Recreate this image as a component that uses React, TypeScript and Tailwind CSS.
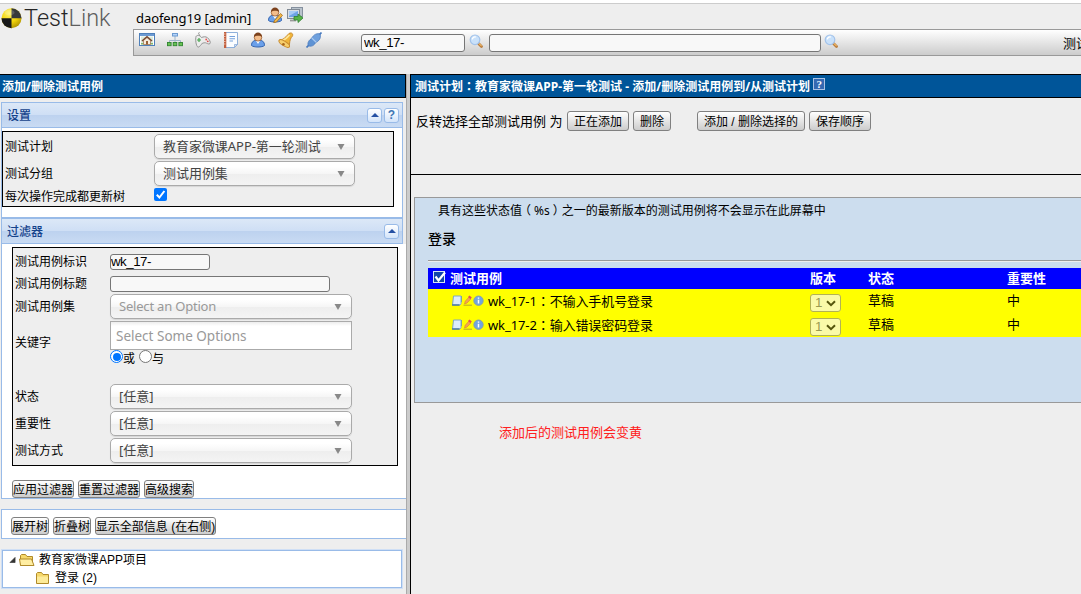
import type { ReactNode } from "react";

const ui = "font-['Noto_Sans','Noto_Sans_CJK_SC',sans-serif]";
const arial = "font-['Liberation_Sans','Noto_Sans_CJK_SC',sans-serif]";

function Icon({ children, className = "" }: { children: ReactNode; className?: string }) {
  return (
    <svg viewBox="0 0 16 16" className={"block size-4 shrink-0 " + className}>
      {children}
    </svg>
  );
}

function Mark({ children, className = "" }: { children: ReactNode; className?: string }) {
  return <span className={"font-['Noto_Sans_CJK_TC',sans-serif] " + className}>{children}</span>;
}

function Logo() {
  return (
    <div className="flex w-[133px] shrink-0 items-start pl-px">
      <svg viewBox="0 0 21 22" className="mt-[3px] h-[22px] w-[21px]">
        <defs>
          <radialGradient id="ball" cx="0.4" cy="0.25" r="0.8">
            <stop offset="0" stopColor="#fff36a" />
            <stop offset="0.55" stopColor="#f2d40a" />
            <stop offset="1" stopColor="#a88c00" />
          </radialGradient>
        </defs>
        <circle cx="10.5" cy="11.3" r="10" fill="url(#ball)" />
        <path d="M10.5 11.3V1.3a10 10 0 0 1 10 10z" fill="#383a3b" />
        <path d="M10.5 11.3v10a10 10 0 0 1-10-10z" fill="#18191a" />
        <ellipse cx="8.5" cy="5.5" rx="5" ry="3" fill="#fff" opacity=".18" />
      </svg>
      <div className="ml-[2px] whitespace-nowrap font-['Roboto','Liberation_Sans',sans-serif] text-[23.5px] leading-[29px] font-light text-[#262626]">
        Test<span className="font-light text-[#5e5e5e]">Link</span>
      </div>
    </div>
  );
}

function Magnifier({ className = "" }: { className?: string }) {
  return (
    <Icon className={className}>
      <path d="M9.500 9.500l3 3" stroke="#b87a3a" strokeWidth="2.800" strokeLinecap="round" />
      <path d="M10 9.500l2.600 2.600" stroke="#edb868" strokeWidth="1.100" />
      <circle cx="6" cy="5.800" r="4.800" fill="#c9e1fa" stroke="#a3c3ea" strokeWidth="1.200" />
      <path d="M3.300 5.300a3 3 0 0 1 3.500-2.300" stroke="#fff" strokeWidth="1.300" fill="none" />
    </Icon>
  );
}

function HomeIcon() {
  return (
    <Icon>
      <rect x=".5" y="1.500" width="15" height="12" fill="#fff" stroke="#4f80ba" />
      <path d="M1 2h14v2H1z" fill="#6d9bd3" />
      <path d="M2 4.500h12v8H2z" fill="#dcebdc" />
      <path d="M2 12.500h12V11H2z" fill="#85b870" />
      <path d="M4.500 8.500V12.500h7v-4L8 5.500z" fill="#f6ecdc" stroke="#a06a45" strokeWidth=".7" />
      <path d="M3 9L8 4.700 13 9" fill="none" stroke="#7a4a34" strokeWidth="1.500" />
      <path d="M7 9h2v3.500H7z" fill="#9a6238" />
    </Icon>
  );
}

function SitemapIcon() {
  return (
    <Icon>
      <path d="M8 4v4M2.500 11V8.500h11V11M8 8v3" fill="none" stroke="#a0b4c8" />
      <rect x="5.500" y="1.500" width="5" height="2.500" fill="#b4d4fb" stroke="#6d9bd0" />
      <g fill="#69c254" stroke="#2f8430" strokeWidth=".9">
        <rect x=".5" y="10.500" width="3.600" height="3.200" />
        <rect x="6.200" y="10.500" width="3.600" height="3.200" />
        <rect x="11.900" y="10.500" width="3.600" height="3.200" />
      </g>
    </Icon>
  );
}

function GamepadIcon() {
  return (
    <Icon>
      <path d="M4 4.500C6 3 2 1.500 4.500.300" stroke="#888" fill="none" />
      <path
        d="M1 4.500C2 2.800 5 3 6.500 5.500c2-.7 4-1.300 6 .2 2 1.500 3.500 5 2.400 6-1.200 1-3.200-.7-4.500-.9-1.800 0-3 .1-4.300 1.700-1 1.300-1.800 3-3.200 2.500C1 14.300.2 7 1 4.500z"
        fill="#ececec"
        stroke="#8b8b8b"
        strokeWidth=".9"
      />
      <path d="M4 6v4M2 8h4" stroke="#45a54b" strokeWidth="1.200" />
      <circle cx="11.200" cy="7.500" r=".9" fill="#e65454" />
      <circle cx="12.800" cy="9.300" r=".9" fill="#db4444" />
    </Icon>
  );
}

function NotebookIcon() {
  return (
    <Icon>
      <path d="M1.500.5h13v12l-3 3h-10z" fill="#fbfdff" stroke="#8fb0da" />
      <path d="M1 0h2.300v16H1z" fill="#c2603f" />
      <path d="M.5 2h2M.5 4.500h2M.5 7h2M.5 9.500h2M.5 12h2" stroke="#f2d4c5" strokeWidth=".8" />
      <path d="M6.500 4.500h5.500M6.500 6.800h5.500M6.500 9h3.500" stroke="#75a1dc" strokeWidth="1.100" />
      <path d="M11.500 15.500v-3h3z" fill="#cddff5" stroke="#7fa4d4" strokeWidth=".7" />
    </Icon>
  );
}

function UserShape() {
  return (
    <>
      <path d="M1.500 13.500C1.500 9.500 4 8 8 8s6.500 1.500 6.500 5.500c-2 2-11 2-13 0z" fill="#6ba0ea" stroke="#3465b0" />
      <path d="M5.800 8.500L8 12l2.200-3.500z" fill="#fff" />
      <circle cx="8" cy="5.300" r="3.800" fill="#f3bd8b" stroke="#995a2e" strokeWidth=".8" />
      <path d="M4 5c0-6 8-6 8 0-1.700-1.800-6-1.800-8 0z" fill="#7c421d" />
    </>
  );
}

function BellIcon() {
  return (
    <Icon>
      <path
        d="M1 8.500C5 8 7.500 5.500 10 2.500c1-1.700 3.500-2 4.300-.8.8 1 .4 2.600-1 3.800-1.500 2-1.800 5.500-2 9.500z"
        fill="#f0b53b"
        stroke="#c98a2c"
      />
      <path d="M3.500 9C7 8 9 6 11.500 3" stroke="#ffe696" strokeWidth="1.600" fill="none" />
      <ellipse cx="6.200" cy="11.500" rx="6" ry="2.300" transform="rotate(32 6.200 11.500)" fill="#f7cf6d" stroke="#c98a2c" />
      <circle cx="5.400" cy="12.300" r="1.300" fill="#a8651b" />
    </Icon>
  );
}

function PlugIcon() {
  return (
    <Icon>
      <path d="M.5 15.500l3-3M12.500 3.500l3-3" stroke="#4779bd" strokeWidth="1.600" />
      <path d="M2.200 13.800C1.200 10.500 3 8 6.200 6l3.800 3.800C8.500 13.500 5.500 15 2.200 13.800z" fill="#5f93d4" stroke="#4779bd" strokeWidth=".8" />
      <path d="M6 5.800C7.500 2.800 11 .8 14 2c1.300 3.200-.4 6.500-3.600 8.200z" fill="#6fa0dd" stroke="#4779bd" strokeWidth=".8" />
      <path d="M5.800 6l4.400 4.200" stroke="#a9caf2" strokeWidth="1.200" />
    </Icon>
  );
}

function TopBar() {
  return (
    <header className="flex h-[74px] w-full border-t border-[#ccc] bg-[#eee]">
      <Logo />
      <div className="flex min-w-0 grow flex-col">
        <div className="flex h-[25px] items-start pl-[3px]">
          <span className={ui + " mt-[4px] w-[131px] whitespace-nowrap text-[13px] leading-[20px] tracking-[-0.08px]"}>
            daofeng19 [admin]
          </span>
          <Icon className="mt-[3px]">
            <UserShape />
            <path d="M7.500 13.500l6-7 2 1.800-6 6.700-2.800.8z" fill="#f4b948" stroke="#a46b1b" strokeWidth=".8" />
          </Icon>
          <Icon className="ml-[4px] mt-[3px]">
            <rect x="4.500" y=".5" width="11" height="9" fill="#b9c3cc" stroke="#85909e" />
            <rect x=".5" y="2.500" width="12" height="9" fill="#d9dee4" stroke="#808994" />
            <path d="M2 4h9v6H2z" fill="#6fa3e6" />
            <path d="M2 4h9L2 9z" fill="#a8cbf5" />
            <path d="M3 13.500h6" stroke="#999" strokeWidth="1.800" />
            <path d="M7 9.500h4V7l5 4-5 4.500V13H7z" fill="#57b347" stroke="#2d8130" strokeWidth=".8" />
          </Icon>
        </div>
        <div className="flex h-[27px] w-full overflow-hidden border-y border-l border-[#999] bg-linear-to-b from-white to-[#ccc]">
          <div className="flex w-[227px] shrink-0 gap-[12px] pl-[5px] pt-[2px]">
            <HomeIcon />
            <SitemapIcon />
            <GamepadIcon />
            <NotebookIcon />
            <Icon className="-ml-px">
              <UserShape />
            </Icon>
            <BellIcon />
            <PlugIcon />
          </div>
          <input
            defaultValue="wk_17-"
            className={arial + " mt-[4px] h-[18px] w-[104px] shrink-0 rounded-[3px] border border-[#767676] bg-[#f8f8f8] px-[2px] pb-px text-[13.3px] leading-[15px] tracking-[-0.5px]"}
          />
          <Magnifier className="ml-[4px] mt-[4px]" />
          <input className="ml-[4px] mt-[4px] h-[18px] w-[332px] shrink-0 rounded-[3px] border border-[#767676] bg-[#f8f8f8]" />
          <Magnifier className="ml-[3px] mt-[4px]" />
          <span className={ui + " ml-auto mt-[3px] w-[18px] overflow-hidden whitespace-nowrap text-[13px] leading-[20px]"}>
            测试
          </span>
        </div>
      </div>
    </header>
  );
}

function ToolButton({ children }: { children: ReactNode }) {
  return (
    <div className="flex size-[15px] shrink-0 items-center justify-center rounded-[3px] border border-[#99bbe8] bg-linear-to-b from-white to-[#d3e4fa]">
      {children}
    </div>
  );
}

function UpArrow() {
  return (
    <svg viewBox="0 0 8 4" className="h-[4px] w-[8px]">
      <path d="M0 4l4-4 4 4z" fill="#2450a4" />
    </svg>
  );
}

function PanelHeader({ title, help }: { title: string; help?: boolean }) {
  return (
    <div className="flex h-[26px] w-[402px] items-center gap-[2px] border border-[#99bbe8] bg-[linear-gradient(to_bottom,#dce8f7_0%,#cfdff5_48%,#bdd2ef_52%,#c9dbf3_100%)] pr-[3px] pl-[5px]">
      <span className={ui + " grow pt-[2px] text-[12px] leading-[20px] font-medium text-[#15428b]"}>{title}</span>
      <ToolButton>
        <UpArrow />
      </ToolButton>
      {help && (
        <ToolButton>
          <span className="font-['Liberation_Sans',sans-serif] text-[12px] leading-none font-bold text-[#4077b5]">?</span>
        </ToolButton>
      )}
    </div>
  );
}

function Select({ children, wide, muted }: { children: ReactNode; wide?: boolean; muted?: boolean }) {
  return (
    <div
      className={
        (wide ? "w-[242px] " : "w-[201px] ") +
        (muted ? "text-[#999] " : "text-[#444] ") +
        ui +
        " flex h-[25px] items-center justify-between rounded-[5px] border border-[#aaa] bg-[linear-gradient(to_bottom,#fff_20%,#f6f6f6_50%,#eee_52%,#f4f4f4_100%)] pr-[9px] pl-[8px] text-[13px] shadow-[0_1px_1px_rgba(0,0,0,0.1)]"
      }
    >
      <span className={"whitespace-nowrap " + (muted ? "tracking-[-0.2px]" : "tracking-[-0.04px]")}>{children}</span>
      <svg viewBox="0 0 8 6" className="h-[6px] w-[8px] shrink-0">
        <path d="M.5 0h7L4 6z" fill="#888" />
      </svg>
    </div>
  );
}

function Row({ label, className, children }: { label: string; className: string; children: ReactNode }) {
  return (
    <div className={"flex items-center " + className}>
      <span className={ui + " shrink-0 whitespace-nowrap text-[12px] leading-[18px]"}>{label}</span>
      <div className="ml-auto shrink-0">{children}</div>
    </div>
  );
}

function SmallButton({ children, className }: { children: ReactNode; className: string }) {
  return (
    <button
      className={
        arial +
        " flex h-[18px] shrink-0 items-center justify-center whitespace-nowrap rounded-[3px] border border-[#808080] bg-linear-to-b from-white to-[#ccc] pt-[2px] text-[12px] leading-none " +
        className
      }
    >
      {children}
    </button>
  );
}

function Radio({ on }: { on?: boolean }) {
  return (
    <span
      className={
        "mb-[2px] flex size-[13px] items-center justify-center rounded-full border bg-white " +
        (on ? "border-[#0075ff]" : "border-[#767676]")
      }
    >
      {on && <span className="size-[8px] shrink-0 rounded-full bg-[#0075ff]" />}
    </span>
  );
}

function Folder({ open }: { open?: boolean }) {
  return (
    <Icon>
      <path d="M1.500 13.500v-10l1-1h4l1.500 2h5.500v9z" fill="#f6d86b" stroke="#b08a2a" />
      {open ? (
        <path d="M1.500 13.500l-1-6.500h12l2.500 6.500z" fill="#ffeea2" stroke="#b08a2a" />
      ) : (
        <path d="M2 6.500h11V13H2z" fill="#fdeb99" />
      )}
    </Icon>
  );
}

function SettingsPanel() {
  return (
    <section className="mt-[4px] ml-px h-[116px] w-[402px] shrink-0 border border-t-0 border-[#99bbe8] bg-white">
      <div className="-mx-px">
        <PanelHeader title="设置" help />
      </div>
      <div className="mt-[3px] h-[76px] w-[392px] border border-black bg-[#eee] pt-[2px] pl-[2px]">
        <Row label="测试计划" className="h-[25px] w-[350px]">
          <Select>教育家微课APP-第一轮测试</Select>
        </Row>
        <Row label="测试分组" className="mt-[2px] h-[25px] w-[350px]">
          <Select>测试用例集</Select>
        </Row>
        <div className="flex h-[20px] items-center">
          <span className={ui + " w-[149px] shrink-0 pt-[2px] text-[12px]"}>每次操作完成都更新树</span>
          <span className="mb-[4px] size-[13px] rounded-[2px] bg-[#0075ff]">
            <svg viewBox="0 0 13 13" className="size-[13px]">
              <path d="M2.800 6.800l2.600 2.700 5-6.500" fill="none" stroke="#fff" strokeWidth="2" />
            </svg>
          </span>
        </div>
      </div>
    </section>
  );
}

function FilterPanel() {
  return (
    <section className="ml-px flex h-[281px] shrink-0 flex-col">
      <PanelHeader title="过滤器" />
      <div className="h-[255px] border-b border-l border-[#99bbe8] bg-white pt-[3px] pl-[10px]">
        <div className="h-[219px] w-[386px] border border-black bg-[#eee] pt-[6px] pl-[2px]">
          <Row label="测试用例标识" className="h-[16px] w-[195px]">
            <input
              defaultValue="wk_17-"
              className={arial + " block h-[16px] w-[100px] rounded-[3px] border border-[#767676] bg-[#f8f8f8] px-0 pb-[2px] text-[13.3px] leading-[12px] tracking-[-0.5px]"}
            />
          </Row>
          <Row label="测试用例标题" className="mt-[6px] h-[16px] w-[315px]">
            <input className="block h-[16px] w-[220px] rounded-[3px] border border-[#767676] bg-[#f8f8f8]" />
          </Row>
          <Row label="测试用例集" className="mt-[2px] h-[25px] w-[337px]">
            <Select wide muted>
              Select an Option
            </Select>
          </Row>
          <Row label="关键字" className="mt-[2px] h-[44px] w-[337px]">
            <div className={ui + " flex h-[29px] w-[242px] items-center border border-[#aaa] bg-[linear-gradient(to_bottom,#eee_1%,#fff_15%)] pt-px pl-[5px] text-[13.5px] text-[#999]"}>
              Select Some Options
            </div>
            <div className={ui + " flex h-[15px] items-center text-[12px] leading-[15px]"}>
              <Radio on />
              <span className="mt-[2px] mr-[4px]">或</span>
              <Radio />
              <span className="mt-[2px]">与</span>
            </div>
          </Row>
          <Row label="状态" className="mt-[19px] h-[25px] w-[337px]">
            <Select wide>[任意]</Select>
          </Row>
          <Row label="重要性" className="mt-[2px] h-[25px] w-[337px]">
            <Select wide>[任意]</Select>
          </Row>
          <Row label="测试方式" className="mt-[2px] h-[25px] w-[337px]">
            <Select wide>[任意]</Select>
          </Row>
        </div>
        <div className="mt-[14px] flex gap-[4px]">
          <SmallButton className="w-[62px]">应用过滤器</SmallButton>
          <SmallButton className="w-[62px]">重置过滤器</SmallButton>
          <SmallButton className="w-[50px]">高级搜索</SmallButton>
        </div>
      </div>
    </section>
  );
}

function LeftPane() {
  return (
    <aside className="flex w-[406px] shrink-0 flex-col bg-[#eee]">
      <div className={ui + " flex h-[24px] shrink-0 items-center border-y border-r border-black bg-[#059] pt-[2px] pl-[2px] text-[12px] font-bold text-white"}>
        添加/删除测试用例
      </div>
      <SettingsPanel />
      <FilterPanel />
      <section className="mt-[10px] ml-px flex h-[30px] shrink-0 gap-[4px] border-y border-l border-[#99bbe8] bg-white pt-[7px] pl-[9px]">
        <SmallButton className="w-[38px]">展开树</SmallButton>
        <SmallButton className="w-[38px]">折叠树</SmallButton>
        <SmallButton className="w-[121px]">显示全部信息 (在右侧)</SmallButton>
      </section>
      <section className="mt-[11px] ml-[2px] h-[38px] w-[400px] shrink-0 border border-[#99bbe8] bg-white shadow-[0_0_0_1px_#cfdff5]">
        <div className="flex h-[18px] items-center pl-[6px]">
          <svg viewBox="0 0 7 7" className="h-[6px] w-[7px]">
            <path d="M6.500.5v6h-6z" fill="#333" stroke="#333" strokeWidth=".8" />
          </svg>
          <span className="ml-[3px]">
            <Folder open />
          </span>
          <span className={arial + " ml-[4px] text-[12px]"}>教育家微课APP项目</span>
        </div>
        <div className="flex h-[18px] items-center pl-[32px]">
          <Folder />
          <span className={arial + " ml-[4px] text-[12px]"}>登录 (2)</span>
        </div>
      </section>
    </aside>
  );
}

function ActionButton({ children, className }: { children: ReactNode; className: string }) {
  return (
    <button
      className={
        arial +
        " flex h-[20px] shrink-0 items-center justify-center whitespace-nowrap rounded-[3px] border border-[#808080] bg-linear-to-b from-white to-[#ccc] pt-[2px] text-[12px] leading-none " +
        className
      }
    >
      {children}
    </button>
  );
}

const cases = [
  { id: "wk_17-1", name: "不输入手机号登录" },
  { id: "wk_17-2", name: "输入错误密码登录" },
];

function CaseRow({ id, name }: { id: string; name: string }) {
  return (
    <div className={ui + " flex h-[24px] items-center bg-[#ff0] pl-[23px] text-[13px]"}>
      <svg viewBox="0 0 34 12" className="h-[12px] w-[34px] shrink-0">
        <path d="M2.500 1h7.500v7.500l-1 1.500H1.500z" fill="#dcecfb" stroke="#7fa6c4" />
        <path d="M1 10h7.500" stroke="#42719e" strokeWidth="1.300" />
        <path d="M10.500 1v6" stroke="#6d95ae" strokeWidth=".8" />
        <path d="M13.500 9l.8-2.800L18 2l1.900 1.900L16 8z" fill="#f3a64f" stroke="#dd8a30" strokeWidth=".7" />
        <path d="M17 2l1.500-1.600 2.300 2.200-1.500 1.500z" fill="#e05252" />
        <path d="M12.500 10.200h8.500" stroke="#b8a928" />
        <circle cx="27.500" cy="5.700" r="4.700" fill="#72a4df" stroke="#7f9cae" strokeWidth=".9" />
        <path d="M27.500 4.800v3.700M27.500 2.500v1.300" stroke="#fff" strokeWidth="1.500" />
      </svg>
      <span className="ml-[3px] w-[322px] whitespace-nowrap tracking-[-0.1px]">
        {id}
        <Mark>：</Mark>
        {name}
      </span>
      <span className={arial + " mt-[4px] flex h-[18px] w-[31px] shrink-0 items-center rounded-[3px] border border-[#b2b254] bg-[#fafaa8] pl-[4px] text-[13.3px] text-[#9a9a50]"}>
        1
        <svg viewBox="0 0 10 7" className="ml-[4px] h-[7px] w-[10px]">
          <path d="M1 1.200l4 4 4-4" fill="none" stroke="#55550c" strokeWidth="2" />
        </svg>
      </span>
      <span className="ml-[27px] w-[139px] shrink-0">草稿</span>
      <span className="shrink-0">中</span>
    </div>
  );
}

function RightPane() {
  return (
    <main className="flex min-w-0 grow flex-col border-l border-black bg-[#eee]">
      <div className={ui + " flex h-[24px] shrink-0 items-center border-y border-black bg-[#059] pt-px pl-[4px] text-[12px] font-bold whitespace-nowrap text-white"}>
        <span>
          测试计划<Mark>：</Mark>教育家微课APP-第一轮测试 - 添加/删除测试用例到/从测试计划
        </span>
        <span className="mb-[5px] ml-[3px] flex size-[12px] items-center justify-center border border-[#a9c2e4] bg-[#3469b2] font-['Liberation_Serif',serif] text-[11px] leading-none text-white">
          ?
        </span>
      </div>
      <div className="flex h-[77px] shrink-0 items-start border-b border-black pt-[13px] pl-[5px]">
        <span className={ui + " w-[151px] shrink-0 text-[13px] leading-[20px] whitespace-nowrap"}>反转选择全部测试用例 为</span>
        <ActionButton className="w-[62px]">正在添加</ActionButton>
        <ActionButton className="ml-[4px] w-[38px]">删除</ActionButton>
        <ActionButton className="ml-[26px] w-[108px]">添加 / 删除选择的</ActionButton>
        <ActionButton className="ml-[4px] w-[62px]">保存顺序</ActionButton>
      </div>
      <section className="mt-[22px] ml-[3px] h-[206px] shrink-0 border-y border-l border-[#999] bg-[#cde] pl-[13px]">
        <p className={ui + " mt-[2px] pl-[10px] text-[12px] leading-[20px]"}>
          具有这些状态值<Mark className="mx-[3px] [font-feature-settings:'halt']">（</Mark>%s
          <Mark className="mx-[3px] [font-feature-settings:'halt']">）</Mark>
          之一的最新版本的测试用例将不会显示在此屏幕中
        </p>
        <h2 className={ui + " mt-[7px] text-[14px] leading-[22px] font-medium"}>登录</h2>
        <div className="mt-[10px] h-[2px] border-t border-[#999] bg-[#eee]" />
        <div className="mt-[6px]">
          <div className={ui + " flex h-[21px] items-center bg-[#00f] pl-[5px] text-[13px] font-bold text-white"}>
            <svg viewBox="0 0 13 13" className="mb-[3px] size-[13px] shrink-0">
              <rect x=".5" y=".5" width="11" height="11" fill="#1245aa" stroke="#d9e6f5" />
              <path d="M2.500 5.500l3 4L12 1.500" fill="none" stroke="#fff" strokeWidth="2.200" />
            </svg>
            <span className="ml-[4px] w-[360px] shrink-0">测试用例</span>
            <span className="w-[58px] shrink-0">版本</span>
            <span className="w-[139px] shrink-0">状态</span>
            <span className="shrink-0">重要性</span>
          </div>
          {cases.map((c) => (
            <CaseRow key={c.id} id={c.id} name={c.name} />
          ))}
        </div>
      </section>
      <p className={ui + " mt-[19px] ml-[88px] text-[13px] leading-[20px] text-[#ff2020]"}>添加后的测试用例会变黄</p>
    </main>
  );
}

export default function App() {
  return (
    <div className="h-[594px] w-[1081px] overflow-hidden bg-white pt-[3px] text-black">
      <div className="-mb-[3px]">
        <TopBar />
      </div>
      <div className="flex h-[520px]">
        <LeftPane />
        <div className="w-[4px] shrink-0 border-l border-[#aaa] bg-[#ccc]" />
        <RightPane />
      </div>
    </div>
  );
}
